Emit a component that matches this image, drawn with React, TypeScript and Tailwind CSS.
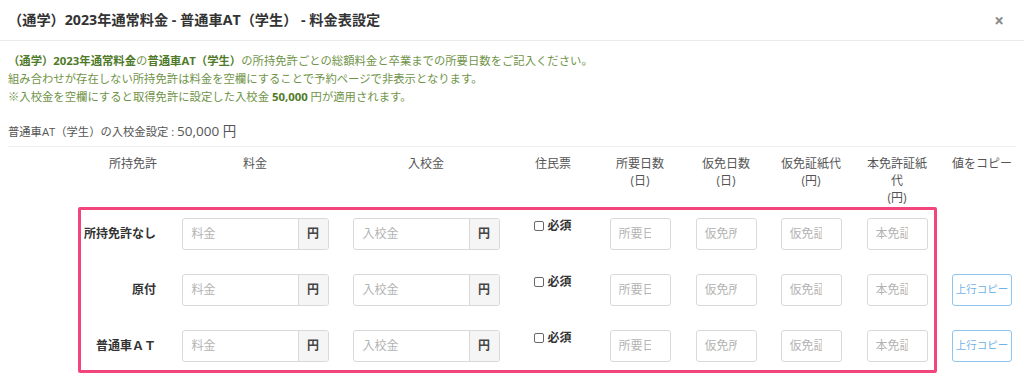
import React from "react";

const FONT = { fontFamily: '"Open Sans", "Noto Sans CJK JP", sans-serif' };

const rows = [
  { label: "所持免許なし", copy: false },
  { label: "原付", copy: true },
  { label: "普通車ＡＴ", copy: true },
];

const COLS = "grid grid-cols-[88px_90px_154px_188px_66px_108px_64px_106px_66px_94px]";

function MoneyInput({ ph }: { ph: string }) {
  return (
    <div className="flex h-[32px] w-[147px] rounded-[3px] border border-[#d9d9d9] overflow-hidden bg-white">
      <div className="flex-1 flex items-center pl-[9px] text-[12px] text-[#b3b3b3]">{ph}</div>
      <div className="w-[30px] flex items-center justify-center border-l border-[#d9d9d9] bg-[#f5f5f5] text-[12px] font-bold text-[#444]">円</div>
    </div>
  );
}

function SmallInput({ ph }: { ph: string }) {
  return (
    <div className="h-[32px] w-[61px] rounded-[3px] border border-[#d9d9d9] bg-white flex items-center pl-[8px] pr-[19px] overflow-hidden">
      <span className="whitespace-nowrap overflow-hidden text-[12px] text-[#b3b3b3]">{ph}</span>
    </div>
  );
}

export default function App() {
  return (
    <div className="w-[1024px] h-[378px] bg-white overflow-hidden text-[#333]" style={FONT}>
      <div className="h-[41px] flex items-center justify-between border-b border-[#ebebeb] pl-[8px] pr-[20px]">
        <div className="text-[14.2px] font-bold text-[#333]">（通学）2023年通常料金 - 普通車AT（学生） - 料金表設定</div>
        <div className="text-[17px] font-bold text-[#8a8a8a] leading-none">×</div>
      </div>

      <div className="pl-[8px] pt-[11px] text-[11.35px] leading-[18px] text-[#6f9448]">
        <div>
          <span className="font-bold text-[#4e7a28]">（通学）2023年通常料金</span>の
          <span className="font-bold text-[#4e7a28]">普通車AT（学生）</span>の所持免許ごとの総額料金と卒業までの所要日数をご記入ください。
        </div>
        <div>組み合わせが存在しない所持免許は料金を空欄にすることで予約ページで非表示となります。</div>
        <div>
          ※入校金を空欄にすると取得免許に設定した入校金 <span className="font-bold text-[#4e7a28]">50,000</span> 円が適用されます。
        </div>
      </div>

      <div className="mx-[8px] mt-[15px] pb-[4px] border-b border-[#eeeeee] text-[11.3px] text-[#555] leading-[20px]">
        普通車AT（学生）の入校金設定 : <span className="text-[13.5px]">50,000 円</span>
      </div>

      <div className={`${COLS} pt-[8px] text-[12px] leading-[17px] text-[#555] text-center`}>
        <div />
        <div>所持免許</div>
        <div>料金</div>
        <div>入校金</div>
        <div>住民票</div>
        <div>所要日数<br />(日)</div>
        <div>仮免日数<br />(日)</div>
        <div>仮免証紙代<br />(円)</div>
        <div className="px-[3px]">本免許証紙代<br />(円)</div>
        <div className="pl-[10px]">値をコピー</div>
      </div>

      <div className="relative">
        {rows.map((r, i) => (
          <div key={i} className={`${COLS} h-[56px] pt-[12px]`}>
            <div />
            <div className="h-[32px] flex items-center justify-end pr-[22px] text-[12px] font-bold text-[#333] whitespace-nowrap">{r.label}</div>
            <div className="flex justify-center"><MoneyInput ph="料金" /></div>
            <div className="flex justify-center"><MoneyInput ph="入校金" /></div>
            <div className="flex justify-center">
              <div className="flex items-center gap-[3px] h-[16px]">
                <span className="w-[10px] h-[10px] border border-[#666] rounded-[2px] bg-white" />
                <span className="text-[12px] font-bold text-[#333]">必須</span>
              </div>
            </div>
            <div className="flex justify-center"><SmallInput ph="所要日数" /></div>
            <div className="flex justify-center"><SmallInput ph="仮免所要日数" /></div>
            <div className="flex justify-center"><SmallInput ph="仮免証紙代" /></div>
            <div className="flex justify-center"><SmallInput ph="本免証紙代" /></div>
            <div className="flex justify-center pl-[10px]">
              {r.copy && (
                <div className="h-[32px] w-[60px] rounded-[3px] border border-[#8ec5ee] flex items-center justify-center text-[10.5px] text-[#6fb2e8]">上行コピー</div>
              )}
            </div>
          </div>
        ))}
        <div className="absolute left-[78px] top-[1px] w-[859px] h-[166px] border-[3px] border-[#f2457c] rounded-[2px] pointer-events-none" />
      </div>
    </div>
  );
}
